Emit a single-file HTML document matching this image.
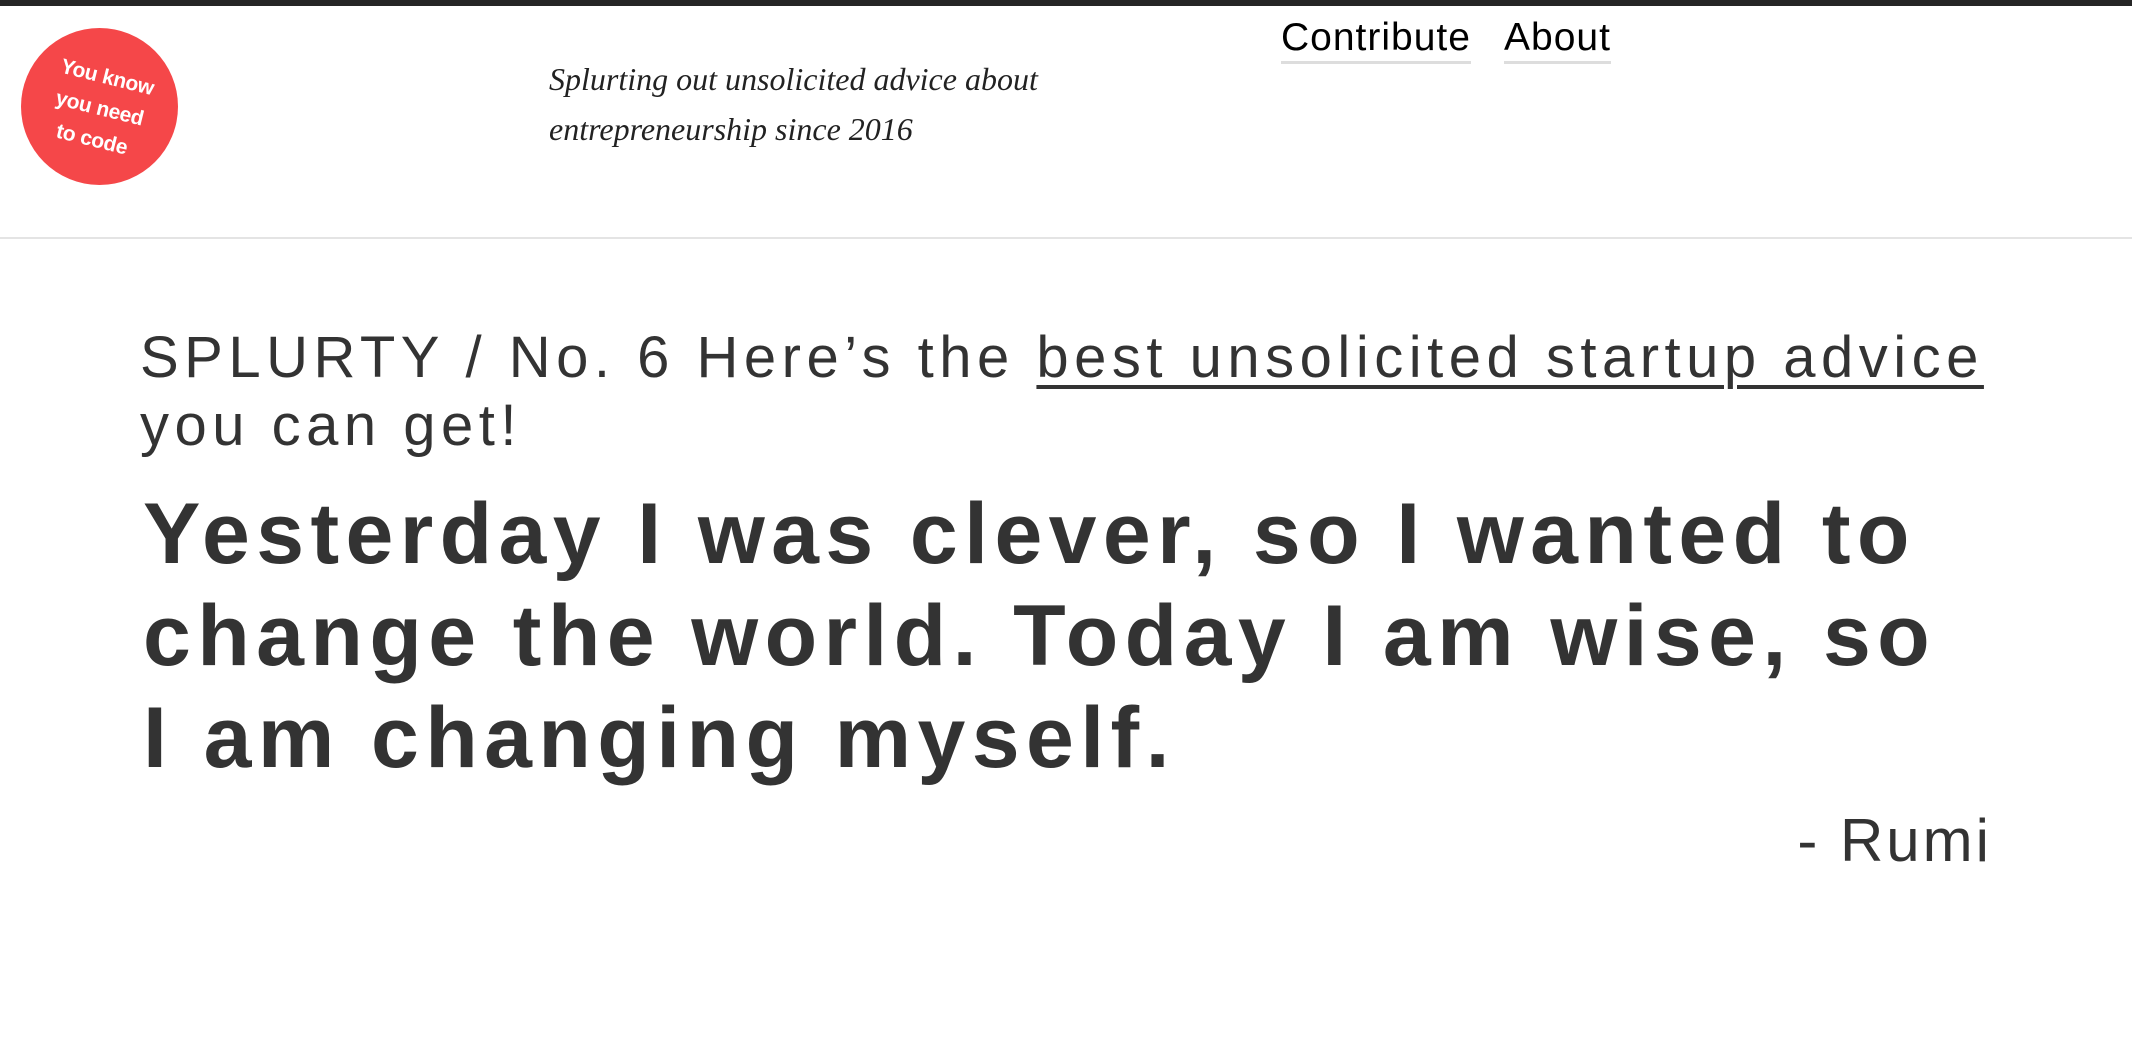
<!DOCTYPE html>
<html><head><meta charset="utf-8"><style>
html,body{margin:0;padding:0;width:2132px;height:1064px;overflow:hidden;background:#fff;}
body{position:relative;font-family:"Liberation Sans",sans-serif;}
.bar{position:absolute;left:0;top:0;width:2132px;height:6px;background:#262626;}
.logo{position:absolute;left:21px;top:28px;width:157px;height:157px;border-radius:50%;background:#f54749;}
.logo div{position:absolute;left:0;top:33px;width:157px;text-align:center;color:#fff;font-weight:bold;font-size:21px;line-height:32px;transform:rotate(14deg);letter-spacing:-0.3px;}
.tag{position:absolute;left:549px;top:54px;font-family:"Liberation Serif",serif;font-style:italic;font-size:32px;line-height:50px;color:#222;}
.nav{position:absolute;top:15px;font-size:39px;color:#000;letter-spacing:1px;line-height:46px;border-bottom:3px solid #ddd;}
.rule{position:absolute;left:0;top:237px;width:2132px;height:2px;background:#e4e4e4;}
.h{position:absolute;left:140px;font-size:58px;color:#333;letter-spacing:5.5px;white-space:nowrap;}
.h u{text-decoration-thickness:4px;text-underline-offset:8px;}
.q{position:absolute;left:143px;font-size:86px;font-weight:bold;color:#333;letter-spacing:6.4px;white-space:nowrap;}
.r{position:absolute;right:140px;top:806px;font-size:60px;color:#333;letter-spacing:3px;}
</style></head><body>
<div class="bar"></div>
<div class="logo"><div>You know<br>you need<br>to code</div></div>
<div class="tag">Splurting out unsolicited advice about<br>entrepreneurship since 2016</div>
<div class="nav" style="left:1281px">Contribute</div>
<div class="nav" style="left:1504px">About</div>
<div class="rule"></div>
<div class="h" style="top:324px">SPLURTY / No. 6 Here’s the <u>best unsolicited startup advice</u></div>
<div class="h" style="top:392px">you can get!</div>
<div class="q" style="top:485px">Yesterday I was clever, so I wanted to</div>
<div class="q" style="top:587px">change the world. Today I am wise, so</div>
<div class="q" style="top:689px">I am changing myself.</div>
<div class="r">- Rumi</div>
</body></html>
